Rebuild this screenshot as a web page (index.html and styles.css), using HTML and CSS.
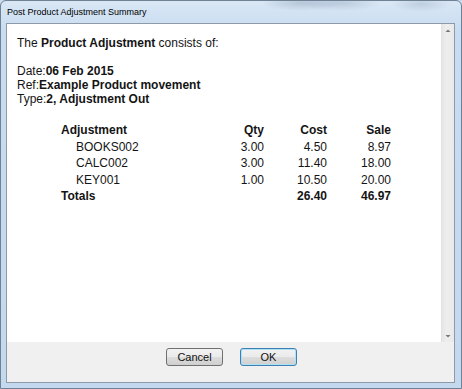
FILE: index.html
```html
<!DOCTYPE html>
<html>
<head>
<meta charset="utf-8">
<link rel="stylesheet" href="styles.css">
</head>
<body>
<div class="window">
  <div class="titlebar">Post Product Adjustment Summary</div>
  <div class="client">
    <div class="panel">
      <div class="content">
        <p class="intro">The <b>Product Adjustment</b> consists of:</p>
        <div class="meta">
          <div>Date:<b>06 Feb 2015</b></div>
          <div>Ref:<b>Example Product movement</b></div>
          <div>Type:<b>2, Adjustment Out</b></div>
        </div>
        <div class="table">
          <div class="th">Adjustment</div><div class="th num">Qty</div><div class="th num">Cost</div><div class="th num">Sale</div>
          <div class="item">BOOKS002</div><div class="num">3.00</div><div class="num">4.50</div><div class="num">8.97</div>
          <div class="item">CALC002</div><div class="num">3.00</div><div class="num">11.40</div><div class="num">18.00</div>
          <div class="item">KEY001</div><div class="num">1.00</div><div class="num">10.50</div><div class="num">20.00</div>
          <div class="th">Totals</div><div class="num"></div><div class="th num">26.40</div><div class="th num">46.97</div>
        </div>
      </div>
      <div class="scrollbar">
        <svg class="arrow" width="12" height="12" viewBox="0 0 12 12"><path d="M3.5 8 L6 5.5 L8.5 8 Z" fill="#777"/></svg>
        <svg class="arrow" width="12" height="12" viewBox="0 0 12 12"><path d="M3.5 5 L6 7.5 L8.5 5 Z" fill="#777"/></svg>
      </div>
    </div>
    <div class="buttons">
      <button class="btn">Cancel</button>
      <button class="btn default">OK</button>
    </div>
  </div>
</div>
</body>
</html>
```
FILE: styles.css
```css
html, body {
  margin: 0;
  padding: 0;
  width: 462px;
  height: 389px;
  overflow: hidden;
  background: #c9dcf0;
}
.window {
  box-sizing: border-box;
  width: 462px;
  height: 389px;
  border: 1px solid #6f8194;
  border-radius: 6px 6px 0 0;
  background:
    radial-gradient(ellipse 40px 8px at 300px 2px, rgba(120,140,165,0.35), transparent),
    radial-gradient(ellipse 40px 8px at 340px 2px, rgba(120,140,165,0.3), transparent),
    radial-gradient(ellipse 30px 8px at 420px 3px, rgba(120,140,165,0.25), transparent),
    linear-gradient(to bottom, #d9e7f5 0px, #c9dcf1 30px, #c4d8ee 389px);
  display: flex;
  flex-direction: column;
  padding: 0 6px 5px 5px;
}
.titlebar {
  height: 22px;
  flex: none;
  font-family: "Liberation Sans", Arial, sans-serif;
  font-size: 9px;
  line-height: 22px;
  color: #000;
  padding-left: 1px;
}
.client {
  flex: 1;
  display: flex;
  flex-direction: column;
  border: 1px solid #8e9aa8;
  background: #f0f0f0;
  min-height: 0;
}
.panel {
  flex: 1;
  display: flex;
  background: #fff;
  min-height: 0;
}
.content {
  flex: 1;
  padding: 12px 0 0 10px;
  font-family: "Liberation Sans", Arial, sans-serif;
  font-size: 12px;
  color: #141414;
}
.intro {
  margin: 0;
  line-height: 14px;
}
.meta {
  margin-top: 14px;
  line-height: 14px;
}
.table {
  margin: 16px 0 0 44px;
  display: grid;
  grid-template-columns: 153px 50px 63px 64px;
  line-height: 16.6px;
}
.th { font-weight: bold; }
.item { padding-left: 15px; }
.num { text-align: right; }
.scrollbar {
  width: 12px;
  flex: none;
  background: linear-gradient(to right, #e6e6e6, #eeeeee 40%, #e9e9e9);
  border-left: 1px solid #e2e2e2;
  display: flex;
  flex-direction: column;
  justify-content: space-between;
}
.arrow { display: block; }
.buttons {
  height: 40px;
  flex: none;
  display: flex;
  justify-content: center;
  align-items: flex-start;
  gap: 17px;
  padding-top: 6px;
  padding-left: 2px;
  box-sizing: border-box;
}
.btn {
  width: 57px;
  height: 18px;
  box-sizing: border-box;
  border: 1px solid #707070;
  border-radius: 3px;
  background: linear-gradient(to bottom, #f2f2f2 0%, #ebebeb 50%, #dddddd 51%, #cfcfcf 100%);
  font-family: "Liberation Sans", Arial, sans-serif;
  font-size: 11px;
  color: #111;
  padding: 0;
  line-height: 16px;
}
.btn.default {
  border-color: #3c7fb1;
  box-shadow: inset 0 0 0 1px #aee1f8;
}
```
